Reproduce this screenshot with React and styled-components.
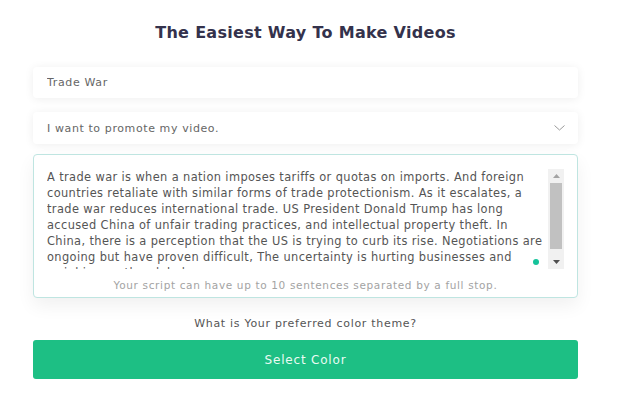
import React, { useState } from 'react';
import styled, { createGlobalStyle } from 'styled-components';

const GlobalStyle = createGlobalStyle`
  html, body {
    margin: 0;
    padding: 0;
    background: #ffffff;
  }
  body {
    font-family: "DejaVu Sans", "Open Sans", sans-serif;
  }
`;

const Page = styled.div`
  width: 618px;
  height: 394px;
  overflow: hidden;
  background: #ffffff;
`;

const Form = styled.form`
  display: flex;
  flex-direction: column;
  width: 545px;
  margin-left: 33px;
  padding-top: 23px;
`;

const Title = styled.h2`
  margin: 0 0 24px;
  text-align: center;
  font-size: 16px;
  line-height: 20px;
  font-weight: bold;
  letter-spacing: 0.3px;
  color: #34324c;
`;

const Field = styled.div`
  position: relative;
  margin-bottom: ${(p) => p.gap || 14}px;
`;

const Input = styled.input`
  box-sizing: border-box;
  width: 100%;
  height: 31px;
  padding: 0 14px;
  border: none;
  border-radius: 4px;
  background: #ffffff;
  box-shadow: 0 1px 10px rgba(0, 0, 0, 0.07);
  font-family: inherit;
  font-size: 11px;
  letter-spacing: 0.65px;
  color: #666666;
  outline: none;
`;

const Select = styled.select`
  box-sizing: border-box;
  width: 100%;
  height: 32px;
  padding: 0 14px;
  border: none;
  border-radius: 4px;
  background: #ffffff;
  box-shadow: 0 1px 10px rgba(0, 0, 0, 0.07);
  font-family: inherit;
  font-size: 11px;
  letter-spacing: 0.6px;
  color: #666666;
  appearance: none;
  outline: none;
`;

const Chevron = styled.svg`
  position: absolute;
  right: 13px;
  top: 13px;
  pointer-events: none;
`;

const ScriptBox = styled.div`
  position: relative;
  display: flex;
  flex-direction: column;
  padding: 14px 13px 4px;
  border: 1px solid #bfe5e1;
  border-radius: 4px;
  background: #ffffff;
  box-shadow: 0 8px 18px rgba(0, 0, 0, 0.06);
`;

const Script = styled.textarea`
  box-sizing: border-box;
  width: 100%;
  height: 100px;
  margin: 0;
  padding: 0 18px 0 0;
  border: none;
  resize: none;
  font-family: inherit;
  font-size: 11.4px;
  letter-spacing: 0.38px;
  line-height: 16px;
  color: #555555;
  white-space: pre;
  outline: none;
  overflow: hidden;
`;

const Scrollbar = styled.div`
  position: absolute;
  top: 14px;
  right: 13px;
  display: flex;
  flex-direction: column;
  width: 16px;
  height: 100px;
  background: #f1f1f1;
`;

const Arrow = styled.div`
  display: flex;
  align-items: center;
  justify-content: center;
  height: 14px;
  flex-shrink: 0;
`;

const Thumb = styled.div`
  height: 66px;
  margin: 0 2px;
  background: #c1c1c1;
`;

const Track = styled.div`
  flex: 1;
`;

const Dot = styled.span`
  position: absolute;
  right: 38px;
  top: 104px;
  width: 6px;
  height: 6px;
  border-radius: 50%;
  background: #15c39a;
`;

const Hint = styled.div`
  margin-top: 8px;
  text-align: center;
  font-size: 10.5px;
  letter-spacing: 0.65px;
  line-height: 16px;
  color: #a3a3a3;
`;

const Question = styled.div`
  margin: 18px 0 8px;
  text-align: center;
  font-size: 11px;
  letter-spacing: 0.7px;
  line-height: 16px;
  color: #555555;
`;

const Button = styled.button`
  height: 39px;
  border: none;
  border-radius: 3px;
  background: #1dbf84;
  color: #eafbf3;
  font-family: inherit;
  font-size: 12px;
  letter-spacing: 0.8px;
  cursor: pointer;
`;

const initialScript = [
  'A trade war is when a nation imposes tariffs or quotas on imports. And foreign',
  'countries retaliate with similar forms of trade protectionism. As it escalates, a',
  'trade war reduces international trade. US President Donald Trump has long',
  'accused China of unfair trading practices, and intellectual property theft. In',
  'China, there is a perception that the US is trying to curb its rise. Negotiations are',
  'ongoing but have proven difficult, The uncertainty is hurting businesses and',
  'weighing on the global economy.',
].join('\n');

const App = () => {
  const [topic, setTopic] = useState('Trade War');
  const [goal, setGoal] = useState('promote');
  const [script, setScript] = useState(initialScript);

  return (
    <Page>
      <GlobalStyle />
      <Form onSubmit={(e) => e.preventDefault()}>
        <Title>The Easiest Way To Make Videos</Title>
        <Field>
          <Input value={topic} onChange={(e) => setTopic(e.target.value)} />
        </Field>
        <Field gap={10}>
          <Select value={goal} onChange={(e) => setGoal(e.target.value)}>
            <option value="promote">I want to promote my video.</option>
            <option value="explain">I want to explain something.</option>
          </Select>
          <Chevron width="11" height="6" viewBox="0 0 11 6">
            <path d="M0.5 0.5 L5.5 5 L10.5 0.5" fill="none" stroke="#9a9a9a" strokeWidth="1" />
          </Chevron>
        </Field>
        <ScriptBox>
          <Script value={script} onChange={(e) => setScript(e.target.value)} />
          <Scrollbar>
            <Arrow>
              <svg width="7" height="4" viewBox="0 0 7 4">
                <path d="M0 4 L3.5 0 L7 4 Z" fill="#a3a3a3" />
              </svg>
            </Arrow>
            <Thumb />
            <Track />
            <Arrow>
              <svg width="7" height="4" viewBox="0 0 7 4">
                <path d="M0 0 L3.5 4 L7 0 Z" fill="#505050" />
              </svg>
            </Arrow>
          </Scrollbar>
          <Dot />
          <Hint>Your script can have up to 10 sentences separated by a full stop.</Hint>
        </ScriptBox>
        <Question>What is Your preferred color theme?</Question>
        <Button type="button">Select Color</Button>
      </Form>
    </Page>
  );
};

export default App;
